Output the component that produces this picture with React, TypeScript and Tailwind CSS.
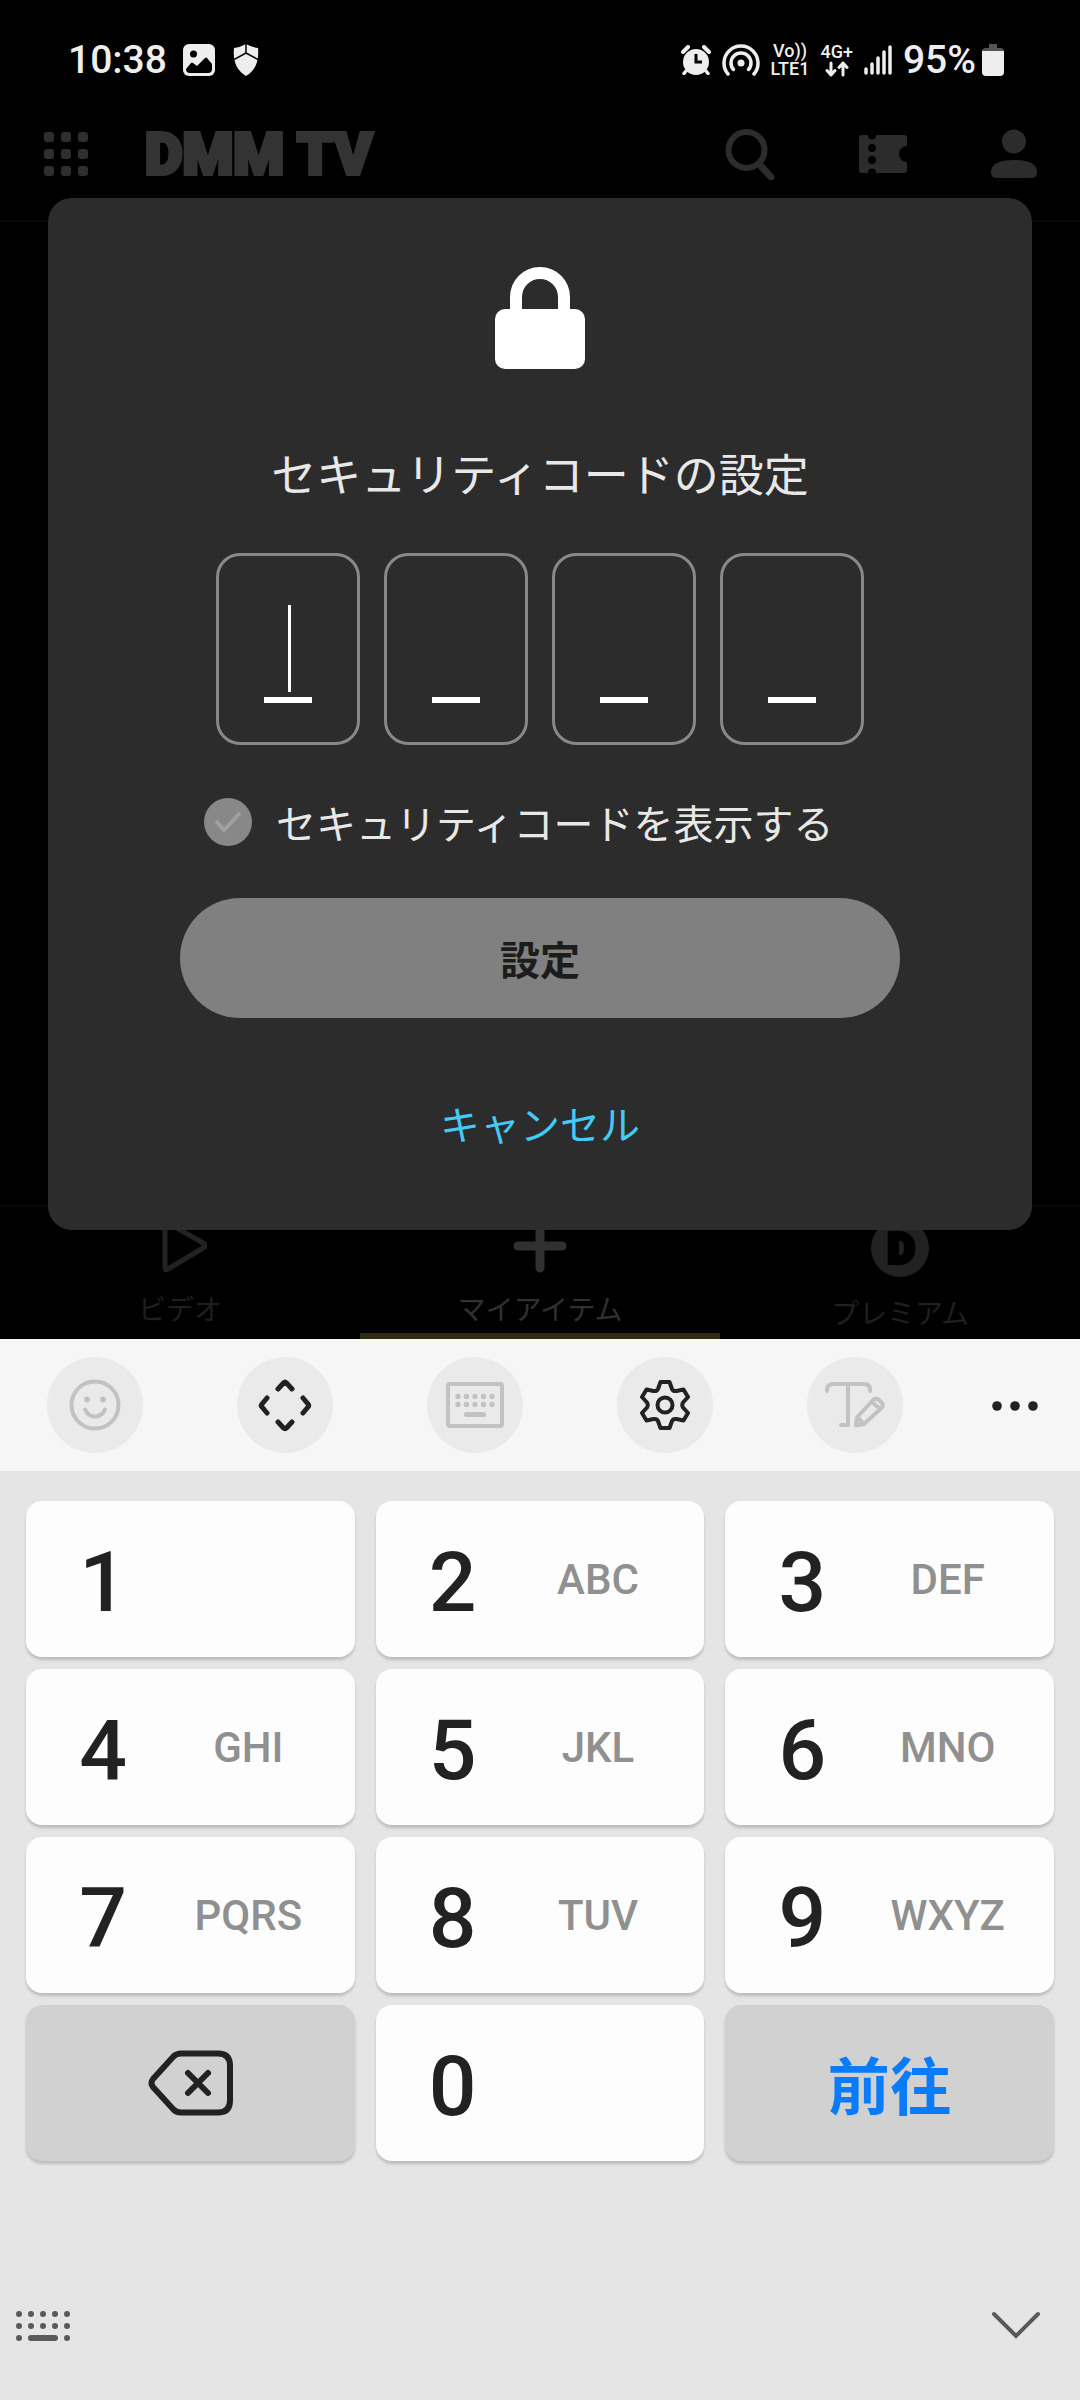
import { useState } from "react";
import type { ReactNode } from "react";

const digitKeys = [
  { digit: "1", letters: "" },
  { digit: "2", letters: "ABC" },
  { digit: "3", letters: "DEF" },
  { digit: "4", letters: "GHI" },
  { digit: "5", letters: "JKL" },
  { digit: "6", letters: "MNO" },
  { digit: "7", letters: "PQRS" },
  { digit: "8", letters: "TUV" },
  { digit: "9", letters: "WXYZ" },
];

const StatusBar = () => (
  <div className="flex h-[120px] items-center justify-between pl-[68px] pr-[76px] text-[#eeeeee]">
    <div className="flex items-center">
      <span className="text-[39px] leading-[48px] font-medium">10:38</span>
      {/* Gallery notification */}
      <svg className="ml-4" width="32" height="32" viewBox="0 0 32 32">
        <rect width="32" height="32" rx="6" fill="#eeeeee" />
        <circle cx="10.500" cy="10" r="3.500" fill="#000" />
        <path d="M3 25l5-6q1-1 2 0l4 3 8-8q1-1 2 0l5 6v5q0 4-4 4H7q-4 0-4-4z" fill="#000" />
      </svg>
      {/* Security notification */}
      <svg className="ml-[18px]" width="26" height="32" viewBox="0 0 26 32">
        <path d="M13 0q5 3 12 4 2 20-12 28Q-1 24 1 4q7-1 12-4z" fill="#eeeeee" />
        <path d="M13 0v9M13 9L0 16M13 9l13 7" stroke="#000" strokeWidth="1.500" fill="none" />
      </svg>
    </div>

    <div className="flex items-center gap-[11px]">
      {/* Alarm */}
      <svg width="30" height="30" viewBox="0 0 30 30">
        <circle cx="15" cy="17" r="13" fill="#eeeeee" />
        <path d="M2 7l5-5M28 7l-5-5" stroke="#eeeeee" strokeWidth="4" strokeLinecap="round" />
        <path d="M5 26l-2 2.500M25 26l2 2.500" stroke="#eeeeee" strokeWidth="3.500" strokeLinecap="round" />
        <path d="M15 9v8h6" stroke="#000" strokeWidth="3" fill="none" />
      </svg>
      {/* Hotspot */}
      <svg width="38" height="34" viewBox="0 0 38 34" fill="none" stroke="#eeeeee" strokeWidth="3.500" strokeLinecap="round">
        <path d="M6 31a17 17 0 1 1 26 0" />
        <path d="M11.500 26.500a10 10 0 1 1 15 0" />
        <circle cx="19" cy="20" r="3.500" fill="#eeeeee" stroke="none" />
      </svg>
      <span className="flex flex-col items-center text-[18px] leading-[18px] font-medium">
        <span>Vo))</span>
        <span>LTE1</span>
      </span>
      <span className="flex flex-col items-center text-[18px] leading-[18px] font-medium">
        <span>4G+</span>
        <svg width="24" height="16" viewBox="0 0 24 16" fill="none" stroke="#eeeeee" strokeWidth="3" strokeLinecap="round" strokeLinejoin="round">
          <path d="M6 2v12M2 9.500L6 14l4-4.500M18 14V2M14 6.500L18 2l4 4.500" />
        </svg>
      </span>
      {/* Signal */}
      <svg width="28" height="30" viewBox="0 0 28 30" stroke="#eeeeee" strokeWidth="3.500" strokeLinecap="round">
        <path d="M2 24v4M8 19v9M14 13v15M20 7v21M26 2v26" />
      </svg>
      <span className="flex items-center gap-1.5">
        <span className="text-[39px] leading-[48px] font-medium">95%</span>
        <svg width="22" height="32" viewBox="0 0 22 32">
          <path d="M7 0h8v4h3q4 0 4 3H0q0-3 4-3h3z" fill="#555" />
          <path d="M0 7h22v21q0 4-4 4H4q-4 0-4-4z" fill="#eeeeee" />
        </svg>
      </span>
    </div>
  </div>
);

const Header = () => (
  <header className="flex h-[102px] items-center justify-between border-b-2 border-[#070707] pb-8 pl-11 pr-[42px]">
    <div className="flex items-center gap-[55px]">
      <button aria-label="メニュー">
        <svg width="46" height="44" viewBox="0 0 46 44" fill="#2e2e2e">
          {[0, 17, 34].map((y) =>
            [0, 17, 34].map((x) => <rect key={`${x}-${y}`} x={x} y={y} width="10" height="10" rx="3" />)
          )}
        </svg>
      </button>
      <a href="#" className="text-[58px] leading-[48px] font-black text-[#333333] [-webkit-text-stroke:4px_#333333]">
        DMM TV
      </a>
    </div>
    <div className="flex items-center gap-[83px]">
      <button aria-label="検索">
        <svg width="51" height="52" viewBox="0 0 51 52" fill="none" stroke="#2c2c2c" strokeWidth="6">
          <circle cx="21.500" cy="22" r="18" />
          <path d="M34 36l12 13" strokeWidth="7" strokeLinecap="round" />
        </svg>
      </button>
      <button aria-label="チケット">
        <svg width="48" height="38" viewBox="0 0 48 38">
          <rect width="48" height="38" rx="3" fill="#2c2c2c" />
          <g fill="#000">
            <circle cx="13" cy="0.500" r="4" />
            <circle cx="13" cy="13" r="4" />
            <circle cx="13" cy="25" r="4" />
            <circle cx="13" cy="37.500" r="4" />
            <circle cx="48" cy="19" r="8" />
          </g>
        </svg>
      </button>
      <button aria-label="アカウント">
        <svg width="48" height="50" viewBox="0 0 48 50" fill="#2c2c2c">
          <circle cx="24" cy="12.500" r="12" />
          <path d="M1 43Q1 31 24 31t23 12q0 6-6 6H7q-6 0-6-6z" />
        </svg>
      </button>
    </div>
  </header>
);

const BottomNav = () => (
  <nav className="grid h-[134px] grid-cols-3 border-t-2 border-[#070707] text-[28px] leading-7 text-[#1f1f1f]">
    <a href="#" className="flex flex-col items-center gap-6 pt-3">
      <svg width="54" height="54" viewBox="0 0 54 54" fill="none" stroke="#222222" strokeWidth="5" strokeLinejoin="round">
        <path d="M12 5.500q0-3 3-1.500l36 20.500q3 2 0 4L15 50q-3 2-3-1.500z" />
      </svg>
      ビデオ
    </a>
    <a href="#" className="flex flex-col items-center gap-6 border-b-6 border-[#302c14] pt-3 text-[#303030]">
      <svg width="54" height="54" viewBox="0 0 54 54" stroke="#303030" strokeWidth="9" strokeLinecap="round">
        <path d="M27 5v44M5 27h44" />
      </svg>
      マイアイテム
    </a>
    <a href="#" className="flex flex-col items-center gap-6 pt-3">
      <svg width="58" height="58" viewBox="0 0 58 58">
        <circle cx="29" cy="29" r="29" fill="#222222" />
        <text x="30" y="44" textAnchor="middle" fontSize="42" fontWeight="900" stroke="#000" strokeWidth="4">
          D
        </text>
      </svg>
      プレミアム
    </a>
  </nav>
);

const SecurityDialog = () => {
  const [visible, setVisible] = useState(false);

  return (
    <form
      role="dialog"
      aria-labelledby="dialog-title"
      className="flex flex-col items-center rounded-3xl bg-[#2c2c2c] pb-[73px] pt-[69px] text-[40px] leading-[60px] text-[#e8e8e8]"
    >
      <svg width="90" height="102" viewBox="0 0 90 102">
        <path d="M21 48V30a24 24 0 0 1 48 0v18" fill="none" stroke="#fff" strokeWidth="12" />
        <rect y="42" width="90" height="60" rx="10" fill="#fff" />
      </svg>
      <h1 id="dialog-title" className="mt-[78px] text-[45px]">
        セキュリティコードの設定
      </h1>

      <div className="mt-[46px] flex gap-6">
        {[1, 2, 3, 4].map((position) => (
          <label
            key={position}
            className="relative flex h-48 w-36 flex-col items-center rounded-3xl border-3 border-[#888888] pb-[39px]"
          >
            <input
              aria-label={`${position}桁目`}
              type={visible ? "text" : "password"}
              inputMode="numeric"
              maxLength={1}
              className="min-h-0 w-full flex-1 bg-transparent text-center text-[60px] outline-none"
            />
            <span className="h-1.5 w-12 bg-white" />
            {position === 1 && <span className="absolute bottom-[50px] left-1/2 h-[87px] w-[3px] bg-white" />}
          </label>
        ))}
      </div>

      <div className="mt-[53px] flex h-12 w-[672px] items-center gap-6">
        <span className="relative size-12">
          <input
            id="show-code"
            type="checkbox"
            checked={visible}
            onChange={(e) => setVisible(e.target.checked)}
            className="block size-12 appearance-none rounded-full bg-[#888888]"
          />
          <svg className="pointer-events-none absolute inset-0" width="48" height="48" viewBox="0 0 48 48" fill="none" stroke="#a0a0a0" strokeWidth="4">
            <path d="M12 23l8 9 16-17" />
          </svg>
        </span>
        <label htmlFor="show-code" className="pt-2">
          セキュリティコードを表示する
        </label>
      </div>

      <button type="submit" disabled className="mt-[52px] h-[120px] w-[720px] rounded-full bg-[#808080] pt-2 font-bold text-[#1c1c1c]">
        設定
      </button>
      <button type="button" className="mt-[79px] text-[#45c9f5]">
        キャンセル
      </button>
    </form>
  );
};

const ToolButton = ({ label, children }: { label: string; children: ReactNode }) => (
  <button aria-label={label} className="flex size-24 items-center justify-center rounded-full bg-[#eaeaea]">
    {children}
  </button>
);

const KeyboardToolbar = () => (
  <div className="flex h-[132px] items-center justify-between bg-[#f6f6f6] pl-[47px] pr-[42px]">
    <div className="flex gap-[94px]">
      <ToolButton label="表情">
        <svg width="52" height="52" viewBox="0 0 52 52" fill="none" stroke="#c2c2c2" strokeWidth="4" strokeLinecap="round">
          <circle cx="26" cy="26" r="23.500" />
          <path d="M16 30.500q3 7 10 7t10-7" />
          <circle cx="18" cy="20.500" r="3" fill="#c2c2c2" stroke="none" />
          <circle cx="34" cy="20.500" r="3" fill="#c2c2c2" stroke="none" />
        </svg>
      </ToolButton>
      <ToolButton label="游標">
        <svg width="54" height="54" viewBox="0 0 54 54" fill="none" stroke="#222222" strokeWidth="5" strokeLinecap="round" strokeLinejoin="round">
          <path d="M20 11l5.500-6q1.500-1.500 3 0L34 11M20 44l5.500 6q1.500 1.500 3 0l5.500-6M9 20l-5 6q-1.500 1.500 0 3l5 6M45 20l5 6q1.500 1.500 0 3l-5 6" />
        </svg>
      </ToolButton>
      <ToolButton label="鍵盤">
        <svg width="58" height="46" viewBox="0 0 58 46" fill="#c2c2c2">
          <rect x="2" y="2" width="54" height="42" rx="2" fill="none" stroke="#c2c2c2" strokeWidth="4" />
          {[14.5, 22.5].map((y) =>
            [12, 20.5, 29, 37.5, 46].map((x) => <circle key={`${x}-${y}`} cx={x} cy={y} r="2.700" />)
          )}
          <rect x="18" y="30" width="22" height="5" rx="2.500" />
        </svg>
      </ToolButton>
      <ToolButton label="設定">
        <svg width="50" height="50" viewBox="0 0 50 50" fill="none" stroke="#222222" strokeWidth="4" strokeLinejoin="round">
          <path d="M20.500 2h9l2.500 7q1 2.500 4.500 2l7-1.500 4.500 7.500-5 5.500q-1.500 2.500 0 5l5 5.500-4.500 7.500-7-1.500q-3.500-.5-4.500 2l-2.500 7h-9l-2.500-7q-1-2.500-4.500-2l-7 1.500L2 33l5-5.500q1.500-2.500 0-5L2 17l4.500-7.500 7 1.500q3.500.5 4.500-2z" />
          <circle cx="25" cy="25" r="7.500" />
        </svg>
      </ToolButton>
      <ToolButton label="文字編輯">
        <svg width="60" height="46" viewBox="0 0 60 46" fill="none" stroke="#c2c2c2" strokeWidth="4" strokeLinecap="round" strokeLinejoin="round">
          <path d="M2 9V8q0-6 6-6h31q6 0 6 6v1M23 2v41h-7" />
          <path d="M31 43.500l1-8 16.500-18q2.500-2 5 0l3 3q2.500 2.500 0 5.500L39 42zM33 36l5 5M47 20l7 6" />
        </svg>
      </ToolButton>
    </div>
    <button aria-label="更多">
      <svg width="46" height="12" viewBox="0 0 46 12" fill="#222222">
        <circle cx="5" cy="7" r="4.800" />
        <circle cx="23" cy="7" r="4.800" />
        <circle cx="41" cy="7" r="4.800" />
      </svg>
    </button>
  </div>
);

const DigitKey = ({ digit, letters }: { digit: string; letters: string }) => (
  <button className="flex h-[156px] items-center rounded-2xl bg-[#fdfdfd] pl-[38px] shadow-[0_3px_3px_#0000002b]">
    <span className="w-[78px] pt-2 text-center text-[84px] leading-[96px] font-medium text-[#222222]">{digit}</span>
    <span className="flex-1 pt-0.5 text-center text-[42px] leading-[48px] font-medium text-[#909090]">{letters}</span>
  </button>
);

const Keyboard = () => (
  <div className="flex-1 bg-[#e5e5e5]">
    <KeyboardToolbar />
    <div className="grid grid-cols-3 gap-x-[21px] gap-y-3 px-[26px] pt-[30px]">
      {digitKeys.map((key) => (
        <DigitKey key={key.digit} digit={key.digit} letters={key.letters} />
      ))}
      <button aria-label="刪除" className="flex h-[156px] items-center justify-center rounded-2xl bg-[#d1d1d1] shadow-[0_3px_3px_#0000002b]">
        <svg width="86" height="66" viewBox="0 0 86 66" fill="none" stroke="#222222" strokeWidth="6" strokeLinecap="round" strokeLinejoin="round">
          <path d="M34 3.500h37q12 0 12 12v35q0 12-12 12H34q-5 0-8-3.500L6 37q-3-4 0-8L26 7q3-3.500 8-3.500z" />
          <path d="M41 23l20 20M61 23L41 43" />
        </svg>
      </button>
      <DigitKey digit="0" letters="" />
      <button
        lang="zh-Hant"
        className="h-[156px] rounded-2xl bg-[#d1d1d1] font-['Noto_Sans_CJK_TC',sans-serif] text-[62px] leading-[72px] font-bold text-[#0a7cfb] shadow-[0_3px_3px_#0000002b]"
      >
        前往
      </button>
    </div>

    <div className="flex items-center justify-between pb-[59px] pl-4 pr-[39px] pt-[150px]">
      <button aria-label="切換鍵盤">
        <svg className="block" width="54" height="30" viewBox="0 0 54 30" fill="#5a5a5a">
          {[3, 15].map((y) =>
            [3, 15, 27, 39, 51].map((x) => <circle key={`${x}-${y}`} cx={x} cy={y} r="3" />)
          )}
          <circle cx="3" cy="27" r="3" />
          <rect x="12" y="24" width="30" height="6" rx="3" />
          <circle cx="51" cy="27" r="3" />
        </svg>
      </button>
      <button aria-label="隱藏鍵盤">
        <svg className="block" width="50" height="30" viewBox="0 0 50 30" fill="none" stroke="#5a5a5a" strokeWidth="4" strokeLinecap="round">
          <path d="M3 3l22 22L47 3" />
        </svg>
      </button>
    </div>
  </div>
);

const App = () => {
  return (
    <div className="flex min-h-screen flex-col bg-black font-[Roboto,'Noto_Sans_CJK_JP',sans-serif]">
      {/* Dimmed app and the dialog share one grid cell, the dialog sets its height */}
      <div className="grid" lang="ja">
        <div className="col-start-1 row-start-1 flex flex-col">
          <StatusBar />
          <Header />
          <main className="flex-1" />
          <BottomNav />
        </div>
        <div className="z-10 col-start-1 row-start-1 px-12 pb-[109px] pt-[198px]">
          <SecurityDialog />
        </div>
      </div>
      <Keyboard />
    </div>
  );
};

export default App;
